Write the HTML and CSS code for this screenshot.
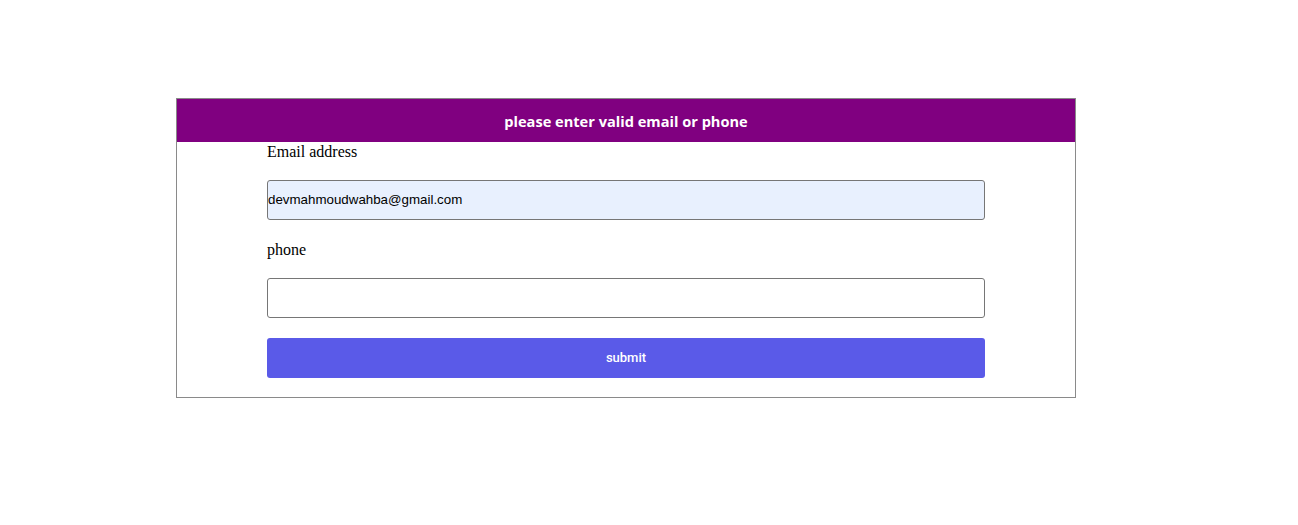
FILE: index.html
```html
<!DOCTYPE html>
<html>
<head>
<meta charset="utf-8">
<link rel="stylesheet" href="styles.css">
</head>
<body>
<div class="card">
  <div class="banner">please enter valid email or phone</div>
  <form class="form">
    <label class="label">Email address</label>
    <input class="field filled" type="text" value="devmahmoudwahba@gmail.com">
    <label class="label">phone</label>
    <input class="field" type="text">
    <button class="submit" type="button">submit</button>
  </form>
</div>
</body>
</html>
```
FILE: styles.css
```css
html, body { margin: 0; padding: 0; background: #fff; }
body { font-family: "Liberation Serif", serif; font-size: 16px; color: #000; }
.card {
  width: 898px;
  margin: 98px 0 0 176px;
  border: 1px solid #8a8a8a;
}
.banner {
  height: 43px;
  background: #800080;
  color: #fff;
  font-family: "Comic Sans MS", "Open Sans", sans-serif;
  font-weight: 700;
  font-size: 14.6px;
  display: flex;
  align-items: center;
  justify-content: center;
}
.form {
  width: 718px;
  margin: 0 auto;
  padding-bottom: 19px;
  display: flex;
  flex-direction: column;
}
.label { display: block; height: 18px; line-height: 20px; margin-bottom: 20px; }
.field {
  box-sizing: border-box;
  height: 40px;
  width: 100%;
  border: 1px solid #767676;
  border-radius: 3px;
  padding: 0 0 2px 0;
  margin: 0 0 20px 0;
  font-family: "Liberation Sans", Arial, sans-serif;
  font-size: 13.33px;
  color: #000;
  background: #fff;
  outline: none;
}
.filled { background: #e8f0fe; }
.submit {
  height: 40px;
  width: 100%;
  border: none;
  border-radius: 3px;
  background: #5a5ae8;
  color: #fff;
  font-family: Roboto, "Liberation Sans", Arial, sans-serif;
  font-size: 13px;
  font-weight: 500;
  padding: 0 0 2px 0;
}
```
